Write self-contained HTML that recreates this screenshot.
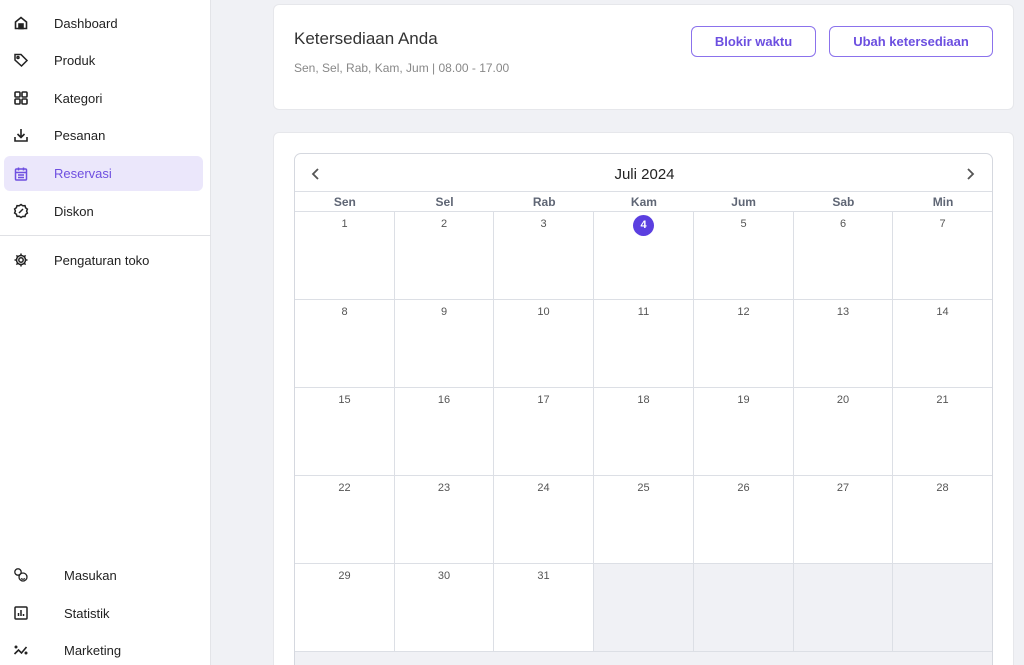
<!DOCTYPE html>
<html style="width:1024px;height:665px;overflow:hidden"><head><meta charset="utf-8"><style>
*{box-sizing:border-box;margin:0;padding:0}
body{width:1024px;height:665px;overflow:hidden;background:#f0f1f5;font-family:"Liberation Sans",sans-serif;position:relative}
.sb{position:absolute;left:0;top:0;width:211px;height:665px;background:#fff;border-right:1px solid #e3e4e8}
.it{position:absolute;left:0;height:36px;width:211px;font-size:13px;color:#222;display:flex;align-items:center}
.it svg{position:absolute;left:13px;width:16px;height:16px}
.it span{position:absolute;left:54px}
.act{left:4px;width:199px;background:#ebe7fb;border-radius:6px;color:#6e4fe0}
.act svg{left:9px}.act span{left:50px}
.card{position:absolute;background:#fff;border:1px solid #e6e7eb;border-radius:6px}
.btn{position:absolute;top:21px;height:31px;border:1.5px solid #8b72ec;border-radius:6px;color:#6c4fe0;font-weight:bold;font-size:13px;display:flex;align-items:center;justify-content:center}
.cal{position:absolute;left:294px;top:153px;width:699px;height:530px;border:1px solid #d5d8df;border-radius:7px;overflow:hidden;background:#fff}
.cell{position:absolute;border-right:1px solid #dcdfe5;border-bottom:1px solid #dcdfe5;font-size:11px;color:#555;text-align:center;padding-top:6px}
.dn{position:absolute;top:38px;height:20px;font-size:12px;font-weight:bold;color:#5f6675;text-align:center;line-height:20px}
</style></head><body>
<div class="sb">
<div class="it" style="top:5px"><svg viewBox="0 0 16 16" fill="none" stroke="#222" stroke-width="1.6"><path d="M2.5 7L8 2.5 13.5 7v6.5h-11z"/><rect x="6" y="9" width="4" height="4.5" fill="#222"/></svg><span>Dashboard</span></div>
<div class="it" style="top:42px"><svg viewBox="0 0 16 16" fill="none" stroke="#222" stroke-width="1.5"><path d="M2 2.5h6l6 6-5.5 5.5-6.5-6z"/><circle cx="5" cy="5.5" r="1"/></svg><span>Produk</span></div>
<div class="it" style="top:80px"><svg viewBox="0 0 16 16" fill="none" stroke="#222" stroke-width="1.6"><rect x="2" y="2" width="5" height="5" rx="1"/><rect x="9" y="2" width="5" height="5" rx="1"/><rect x="2" y="9" width="5" height="5" rx="1"/><rect x="9" y="9" width="5" height="5" rx="1"/></svg><span>Kategori</span></div>
<div class="it" style="top:117px"><svg viewBox="0 0 16 16" fill="none" stroke="#222" stroke-width="1.6"><path d="M8 2v8M4.5 7L8 10.5 11.5 7M2 10v4h12v-4"/></svg><span>Pesanan</span></div>
<div class="it act" style="top:156px;height:35px"><svg viewBox="0 0 16 16" fill="none" stroke="#6e4fe0" stroke-width="1.5"><rect x="2.5" y="3" width="11" height="11" rx="1"/><path d="M2.5 6.5h11M5.5 1.5v3M10.5 1.5v3M5 9h6M5 11.5h6"/></svg><span>Reservasi</span></div>
<div class="it" style="top:193px"><svg viewBox="0 0 16 16" fill="none" stroke="#222" stroke-width="1.5"><path d="M8 1.5l1.8 1.3 2.2-.1.6 2.1 1.8 1.3-.8 2 .8 2-1.8 1.3-.6 2.1-2.2-.1L8 14.5l-1.8-1.3-2.2.1-.6-2.1L1.6 10l.8-2-.8-2 1.8-1.3.6-2.1 2.2.1z"/><path d="M6 10l4-4"/></svg><span>Diskon</span></div>
<div style="position:absolute;left:0;top:235px;width:211px;height:1px;background:#e0e1e5"></div>
<div class="it" style="top:242px"><svg viewBox="0 0 16 16" fill="none" stroke="#222" stroke-width="1.5"><circle cx="8" cy="8" r="2.2"/><path d="M8 1.5v2M8 12.5v2M1.5 8h2M12.5 8h2M3.4 3.4l1.4 1.4M11.2 11.2l1.4 1.4M3.4 12.6l1.4-1.4M11.2 4.8l1.4-1.4"/><circle cx="8" cy="8" r="4.5"/></svg><span>Pengaturan toko</span></div>
<div class="it" style="top:557px"><svg viewBox="0 0 16 16" fill="none" stroke="#222" stroke-width="1.3"><circle cx="5" cy="5" r="3.2"/><circle cx="10" cy="10" r="4"/><path d="M8 11.5q2 1.5 4 0"/></svg><span style="left:64px">Masukan</span></div>
<div class="it" style="top:595px"><svg viewBox="0 0 16 16" fill="none" stroke="#222" stroke-width="1.5"><rect x="2" y="2" width="12" height="12" rx="1"/><path d="M5.5 11V8M8 11V5M10.5 11V9"/></svg><span style="left:64px">Statistik</span></div>
<div class="it" style="top:632px"><svg viewBox="0 0 16 16" fill="none" stroke="#222" stroke-width="1.6"><path d="M1.5 12l4-4 3 3 5-6"/><circle cx="3" cy="5" r=".7"/><circle cx="13" cy="11" r=".7"/></svg><span style="left:64px">Marketing</span></div>
</div>

<div class="card" style="left:273px;top:4px;width:741px;height:106px">
<div style="position:absolute;left:20px;top:24px;font-size:17px;color:#333">Ketersediaan Anda</div>
<div style="position:absolute;left:20px;top:56px;font-size:12px;color:#888">Sen, Sel, Rab, Kam, Jum | 08.00 - 17.00</div>
<div class="btn" style="left:417px;width:125px">Blokir waktu</div>
<div class="btn" style="left:555px;width:164px">Ubah ketersediaan</div>
</div>
<div class="card" style="left:273px;top:132px;width:741px;height:540px"></div>
<div class="cal">
<svg style="position:absolute;left:16px;top:13px" width="10" height="14" viewBox="0 0 10 14" fill="none" stroke="#555" stroke-width="1.8"><path d="M7 2L2 7l5 5"/></svg>
<div style="position:absolute;left:0;width:699px;top:12px;text-align:center;font-size:15px;color:#222">Juli 2024</div>
<svg style="position:absolute;left:670px;top:13px" width="10" height="14" viewBox="0 0 10 14" fill="none" stroke="#555" stroke-width="1.8"><path d="M3 2l5 5-5 5"/></svg>
<div style="position:absolute;left:0;top:37px;width:699px;height:1px;background:#dcdfe5"></div>
<div style="position:absolute;left:0;top:57px;width:699px;height:1px;background:#dcdfe5"></div>
<div id="g"></div>
</div>
<script>
var g=document.getElementById('g'),h='',names=['Sen','Sel','Rab','Kam','Jum','Sab','Min'],w=99.7;
for(var i=0;i<7;i++)h+='<div class="dn" style="left:'+(i*w)+'px;width:'+w+'px">'+names[i]+'</div>';
for(var r=0;r<5;r++)for(var c=0;c<7;c++){var d=r*7+c+1,L=Math.round(c*w),W=Math.round((c+1)*w)-L;
var bg=d>31?'#f0f1f5':'#fff';var txt=d>31?'':(d==4?'<span style="display:inline-block;width:21px;height:21px;border-radius:50%;background:#5b3fe0;color:#fff;font-weight:bold;line-height:21px;margin-top:-3px">4</span>':d);
h+='<div class="cell" style="left:'+L+'px;top:'+(58+r*88)+'px;width:'+W+'px;height:88px;background:'+bg+'">'+txt+'</div>';}
h+='<div style="position:absolute;left:0;top:498px;width:699px;height:40px;background:#f0f1f5"></div>';
g.innerHTML=h;
</script>
</body></html>
